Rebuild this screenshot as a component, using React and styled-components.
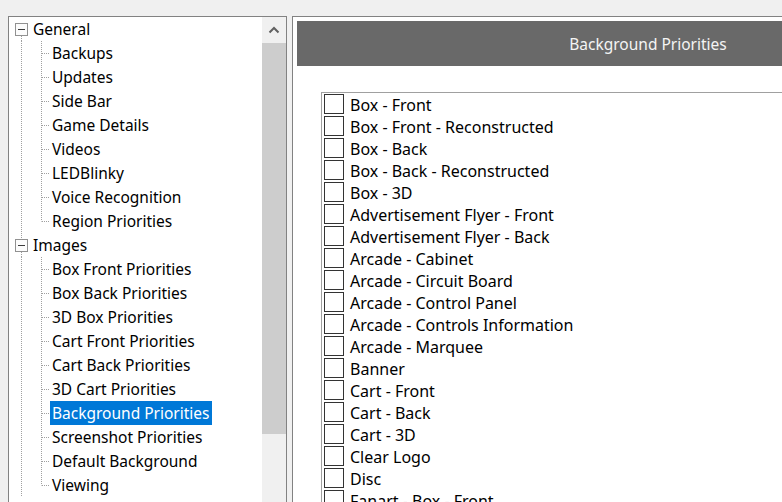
import styled, { createGlobalStyle } from "styled-components";

const GlobalStyle = createGlobalStyle`
  html, body {
    margin: 0;
    padding: 0;
    height: 502px;
    overflow: hidden;
    background: #f0f0f0;
  }
  body {
    font-family: "Noto Sans", "Open Sans", sans-serif;
    font-size: 16px;
    color: #000;
  }
`;

const Page = styled.div`
  display: flex;
  align-items: flex-start;
  gap: 5px;
  padding: 16px 0 0 8px;
  width: 1100px;
  height: 486px;
`;

const TreePanel = styled.div`
  width: 277px;
  height: 520px;
  flex: none;
  display: flex;
  border: 1px solid #828282;
  background: #fff;
`;

const Tree = styled.ul`
  flex: 1;
  list-style: none;
  margin: 0;
  padding: 0;
  font-size: 15.5px;
`;

const Row = styled.li`
  display: flex;
  align-items: center;
  height: 24px;
`;

const Label = styled.span`
  line-height: 24px;
  padding: 0 2px;
  white-space: nowrap;
  background: ${(p) => (p.$selected ? "#0078d7" : "transparent")};
  color: ${(p) => (p.$selected ? "#fff" : "#000")};
`;

const Guide = styled.svg`
  flex: none;
  display: block;
`;

const ScrollBar = styled.div`
  width: 24px;
  flex: none;
  display: flex;
  flex-direction: column;
  background: #f0f0f0;
`;

const ScrollButton = styled.div`
  height: 26px;
  display: flex;
  align-items: center;
  justify-content: center;
`;

const Thumb = styled.div`
  height: 391px;
  background: #cdcdcd;
`;

const ContentPanel = styled.div`
  width: 702px;
  height: 520px;
  flex: none;
  border: 1px solid #828282;
  background: #fff;
  padding: 4px;
`;

const Header = styled.div`
  height: 45px;
  background: #696969;
  color: #f4f4f4;
  font-size: 15.5px;
  display: flex;
  align-items: center;
  justify-content: center;
`;

const ListBox = styled.ul`
  list-style: none;
  margin: 26px 0 0 24px;
  padding: 0;
  border-top: 1px solid #a0a0a0;
  border-left: 1px solid #a0a0a0;
  height: 500px;
`;

const Item = styled.li`
  display: flex;
  align-items: center;
  gap: 6px;
  height: 22px;
  padding-left: 2px;
`;

const Box = styled.span`
  width: 18px;
  height: 18px;
  flex: none;
  border: 1px solid #333;
  background: #fff;
`;

const ItemText = styled.span`
  position: relative;
  top: 1px;
`;

const dots = { stroke: "#a0a0a0", strokeWidth: 1, strokeDasharray: "1 1" };

// root node: minus box with the root trunk line through it
const RootGuide = ({ first }) => (
  <Guide width="22" height="24">
    {!first && <line x1="12.5" y1="0" x2="12.5" y2="6" {...dots} />}
    <line x1="12.5" y1="19" x2="12.5" y2="24" {...dots} />
    <rect x="6.5" y="6.5" width="12" height="12" fill="#fcfcfc" stroke="#919191" />
    <line x1="9" y1="12.5" x2="16" y2="12.5" stroke="#3c3c3c" />
  </Guide>
);

const ChildGuide = ({ last }) => (
  <>
    <Guide width="22" height="24">
      <line x1="12.5" y1="0" x2="12.5" y2="24" {...dots} />
    </Guide>
    <Guide width="19" height="24">
      <line x1="10.5" y1="0" x2="10.5" y2={last ? 12.5 : 24} {...dots} />
      <line x1="11" y1="12.5" x2="19" y2="12.5" {...dots} />
    </Guide>
  </>
);

const tree = [
  {
    name: "General",
    children: [
      "Backups",
      "Updates",
      "Side Bar",
      "Game Details",
      "Videos",
      "LEDBlinky",
      "Voice Recognition",
      "Region Priorities",
    ],
  },
  {
    name: "Images",
    children: [
      "Box Front Priorities",
      "Box Back Priorities",
      "3D Box Priorities",
      "Cart Front Priorities",
      "Cart Back Priorities",
      "3D Cart Priorities",
      "Background Priorities",
      "Screenshot Priorities",
      "Default Background",
      "Viewing",
    ],
  },
];

const selected = "Background Priorities";

const items = [
  "Box - Front",
  "Box - Front - Reconstructed",
  "Box - Back",
  "Box - Back - Reconstructed",
  "Box - 3D",
  "Advertisement Flyer - Front",
  "Advertisement Flyer - Back",
  "Arcade - Cabinet",
  "Arcade - Circuit Board",
  "Arcade - Control Panel",
  "Arcade - Controls Information",
  "Arcade - Marquee",
  "Banner",
  "Cart - Front",
  "Cart - Back",
  "Cart - 3D",
  "Clear Logo",
  "Disc",
  "Fanart - Box - Front",
];

const App = () => {
  return (
    <>
      <GlobalStyle />
      <Page>
        <TreePanel>
          <Tree>
            {tree.map((node, i) => (
              <li key={node.name} style={{ display: "contents" }}>
                <Row>
                  <RootGuide first={i === 0} />
                  <Label>{node.name}</Label>
                </Row>
                {node.children.map((child, j) => (
                  <Row key={child}>
                    <ChildGuide last={j === node.children.length - 1} />
                    <Label $selected={child === selected}>{child}</Label>
                  </Row>
                ))}
              </li>
            ))}
          </Tree>
          <ScrollBar>
            <ScrollButton>
              <svg width="12" height="8" viewBox="0 0 12 8">
                <polyline
                  points="1.5,6.5 6,2 10.5,6.5"
                  fill="none"
                  stroke="#606060"
                  strokeWidth="2"
                />
              </svg>
            </ScrollButton>
            <Thumb />
          </ScrollBar>
        </TreePanel>
        <ContentPanel>
          <Header>Background Priorities</Header>
          <ListBox>
            {items.map((item) => (
              <Item key={item}>
                <Box />
                <ItemText>{item}</ItemText>
              </Item>
            ))}
          </ListBox>
        </ContentPanel>
      </Page>
    </>
  );
};

export default App;
